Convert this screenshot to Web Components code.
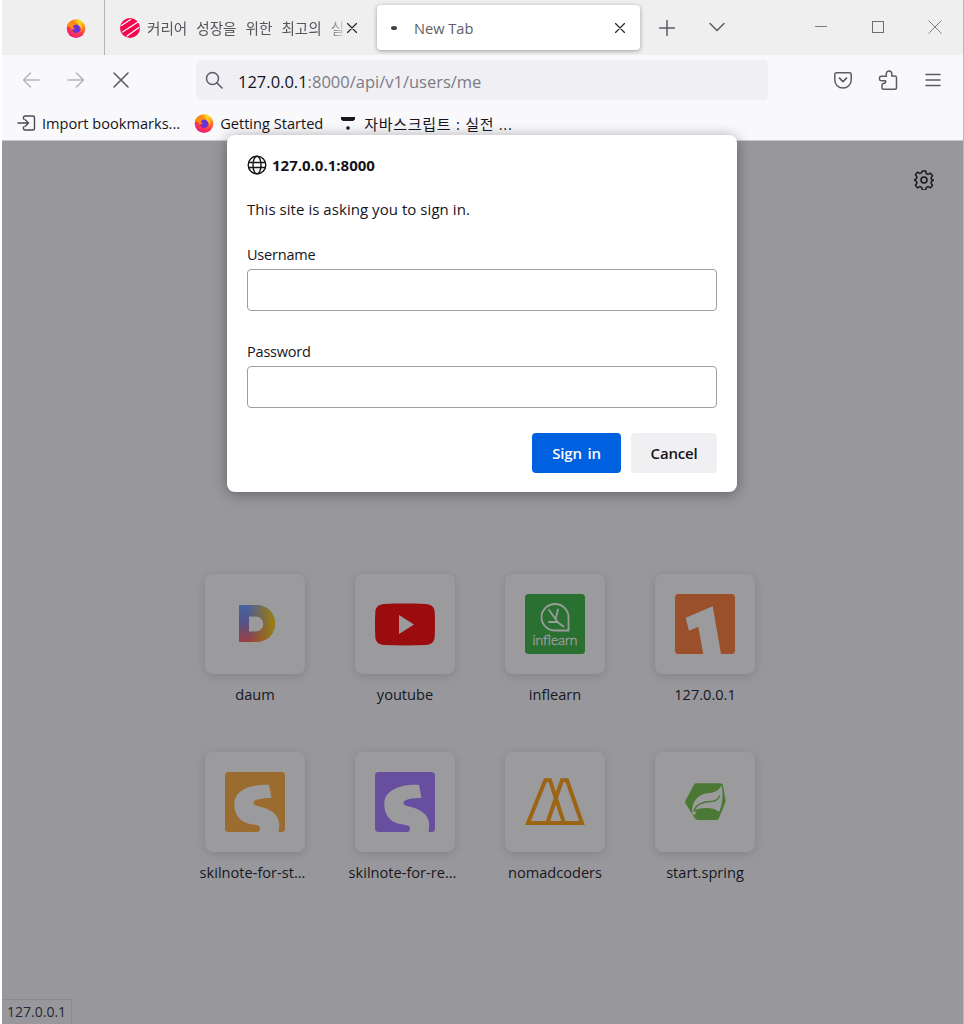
<!DOCTYPE html>
<html lang="ko">
<head>
<meta charset="utf-8">
<title>New Tab</title>
<style>
  html, body { margin: 0; padding: 0; background: #fff; overflow: hidden; }
  body { font: 14px "Open Sans", "Noto Sans CJK KR", sans-serif; color: #15141a; }
</style>
</head>
<body>
<browser-window>
  <tab-strip></tab-strip>
  <nav-toolbar></nav-toolbar>
  <bookmarks-toolbar></bookmarks-toolbar>
  <newtab-page>
    <top-site label="daum" icon="daum"></top-site>
    <top-site label="youtube" icon="youtube"></top-site>
    <top-site label="inflearn" icon="inflearn"></top-site>
    <top-site label="127.0.0.1" icon="one"></top-site>
    <top-site label="skilnote-for-st..." icon="skilOrange" cut></top-site>
    <top-site label="skilnote-for-re..." icon="skilPurple" cut></top-site>
    <top-site label="nomadcoders" icon="nomad"></top-site>
    <top-site label="start.spring" icon="spring"></top-site>
  </newtab-page>
</browser-window>

<script>
const FONT = `"Open Sans", "Noto Sans CJK KR", sans-serif`;

const firefox = (size) => `
  <svg width="${size}" height="${size}" viewBox="0 0 20 20">
    <defs>
      <radialGradient id="ffBase" cx="0.72" cy="0.12" r="1">
        <stop offset="0" stop-color="#ffe226"/>
        <stop offset="0.3" stop-color="#ff980e"/>
        <stop offset="0.68" stop-color="#ff3750"/>
        <stop offset="1" stop-color="#e31587"/>
      </radialGradient>
    </defs>
    <path d="M13.500.3c.3 2.700 3.400 3.700 5 6.800L19.700 11 12 7z" fill="#ffdf2a"/>
    <circle cx="10" cy="10.600" r="9.300" fill="url(#ffBase)"/>
    <circle cx="10.300" cy="10.800" r="4.200" fill="#6a32d6"/>
    <path d="M.9 8.400C1.700 5 4.600 2.800 7.400 2.800c-.8.900-1 1.600-.8 2.300 1.500-.4 3.700-.3 5 .9-2.200-.2-3.800.5-4.300 1.800-.5 1.300.3 2.700 2 3.300-2.200.8-4.800-.2-5.400-2.300-.7.200-1.900 0-3-.4z" fill="#ff8a16"/>
    <path d="M12 5.300c3.200.8 4.800 3.700 4 6.600-.4-2-1.600-3.200-2.900-3.700z" fill="#ffc42e"/>
  </svg>`;

const line = (d, color, w = 1.5) =>
  `<path d="${d}" fill="none" stroke="${color}" stroke-width="${w}" stroke-linecap="round" stroke-linejoin="round"/>`;

const ICONS = {
  daum: `
    <svg width="60" height="60" viewBox="0 0 60 60">
      <defs>
        <linearGradient id="dV" x1="0" y1="0" x2="0" y2="1">
          <stop offset="0" stop-color="#6f9cff"/><stop offset="0.45" stop-color="#7d7fd8"/><stop offset="1" stop-color="#ff5a5a"/>
        </linearGradient>
        <linearGradient id="dH" x1="0" y1="0" x2="1" y2="0">
          <stop offset="0.25" stop-color="#ffc400" stop-opacity="0"/><stop offset="0.95" stop-color="#fdc900"/>
        </linearGradient>
      </defs>
      <path fill-rule="evenodd" fill="url(#dV)" d="M14 11h17c11 0 19 8 19 18.500S42 48 31 48H14zM24 22.500v15h7a7.500 7.500 0 0 0 0-15z"/>
      <path fill-rule="evenodd" fill="url(#dH)" d="M14 11h17c11 0 19 8 19 18.500S42 48 31 48H14zM24 22.500v15h7a7.500 7.500 0 0 0 0-15z"/>
    </svg>`,
  youtube: `
    <svg width="60" height="60" viewBox="0 0 60 60">
      <path d="M9 10c14-.6 28-.6 42 0 5 .2 8.500 3 8.700 8 .4 8.500.4 16.500 0 25-.2 5-3.700 7.800-8.700 8-14 .6-28 .6-42 0-5-.2-8.500-3-8.700-8-.4-8.500-.4-16.500 0-25C.5 13 4 10.200 9 10z" fill="#ff0000"/>
      <path d="M24 21 39 30.500 24 40z" fill="#fff"/>
    </svg>`,
  inflearn: `
    <svg width="60" height="60" viewBox="0 0 60 60">
      <rect width="60" height="60" rx="3.500" fill="#36b23b"/>
      <path d="M30 10c7.500 0 13.500 6 13.500 13.300V36.500H30c-7.500 0-13.500-6-13.500-13.300S22.500 10 30 10z" fill="none" stroke="#fff" stroke-width="1.800"/>
      ${line("M24 16l9 12.500 5.500 4M33 15.500l-2.500 9.500M24 28h8", "#fff", 1.8)}
      <text x="30" y="51" text-anchor="middle" textLength="45" font-family="Lato" font-weight="300" font-size="14" fill="#fff" stroke="#fff" stroke-width=".35">inflearn</text>
    </svg>`,
  one: `
    <svg width="60" height="60" viewBox="0 0 60 60">
      <path d="M3.500 0h53A3.500 3.500 0 0 1 60 3.500V56.500A3.500 3.500 0 0 1 56.500 60H3.500A3.500 3.500 0 0 1 0 56.500V3.500A3.500 3.500 0 0 1 3.500 0z" fill="#ff7935"/>
      <path d="M37.700 12.300 46 60H28.300L23.300 32.700 14 36.700 10.700 23.700z" fill="#fff"/>
    </svg>`,
  skil: (color) => `
    <svg width="60" height="60" viewBox="0 0 60 60">
      <rect width="60" height="60" rx="3.500" fill="${color}"/>
      <path d="M44 13C30 12 12 16 9.500 29 8 41 14 50 25 52c6 1 10 1 10 4.500 0 1.500-1 3-2 3.500H53.500C56 48 52 41 41 36.500 34 34 28.500 34 28.500 31c0-4 9.500-5 18-5z" fill="#fff"/>
    </svg>`,
  nomad: `
    <svg width="60" height="60" viewBox="0 0 60 60">
      <g fill="none" stroke="#ff9f0a" stroke-width="4" stroke-linejoin="miter">
        <path d="M3 51 20.300 8.300H25L39 51z"/>
        <path d="M22.300 51 37 8.300H42L57 51z"/>
      </g>
    </svg>`,
  spring: `
    <svg width="60" height="60" viewBox="0 0 60 60">
      <path d="M21 11.300H45c1.500 0 2.500.7 3 2L50.500 28c.2 1 .1 2-.3 3L44 46c-.5 1.300-1.500 2-3 2H23c-1.500 0-2.500-.7-3.200-2L10.500 31.500c-.6-1-.6-2 0-3L19 12.800c.4-1 1-1.500 2-1.500z" fill="#70c244"/>
      <path d="M46.500 13C45 18 40 20.500 34 21c-9 .8-17 6-17 19 3-2.500 8-4 14-4 6 .3 10 1 13 4 3.500-8 4.500-18 2.500-27z" fill="#fff"/>
      <path d="M19 39c2-7 10-9.500 17-9.500 4 0 7-2 9-6" fill="none" stroke="#70c244" stroke-width="1.500"/>
      <circle cx="19" cy="41" r="1.800" fill="#fff"/>
    </svg>`,
};
ICONS.skilOrange = ICONS.skil("#ffab3b");
ICONS.skilPurple = ICONS.skil("#a276ff");

class BrowserWindow extends HTMLElement {
  constructor() {
    super();
    this.attachShadow({ mode: "open" });
  }

  connectedCallback() {
    this.shadowRoot.innerHTML = `
      <style>
        :host {
          display: flex;
          flex-direction: column;
          box-sizing: border-box;
          width: 964px;
          height: 1024px;
          padding: 0 1px 0 2px;
          background: linear-gradient(#b9b9b9, #b9b9b9) right top / 1px 100% no-repeat;
          font-family: ${FONT};
          overflow: hidden;
        }
      </style>
      <slot></slot>
    `;
  }
}

class TabStrip extends HTMLElement {
  constructor() {
    super();
    this.attachShadow({ mode: "open" });
  }

  connectedCallback() {
    const gray = "#5b5b66";
    this.shadowRoot.innerHTML = `
      <style>
        :host {
          display: flex;
          align-items: center;
          height: 55px;
          flex: none;
          background: #efeff0;
        }
        .pinned {
          box-sizing: border-box;
          width: 103px;
          height: 55px;
          padding-left: 64px;
          display: flex;
          align-items: center;
          border-right: 1px solid #b4b4b4;
        }
        .tab {
          box-sizing: border-box;
          width: 272px;
          height: 45px;
          display: flex;
          align-items: center;
          padding: 0 0 0 15px;
        }
        .tab .title {
          box-sizing: border-box;
          width: 198px;
          margin: 0 2px 0 7px;
          font-size: 14.6px;
          word-spacing: 5.2px;
          color: #55555c;
          white-space: nowrap;
          -webkit-mask-image: linear-gradient(90deg, #000 180px, rgba(0, 0, 0, .15) 197px);
        }
        .active {
          width: 263px;
          background: #fff;
          border-radius: 4px;
          box-shadow: 0 1px 4px rgba(0, 0, 0, .35);
          padding-left: 14px;
        }
        .active .dot {
          width: 6px;
          height: 4px;
          border-radius: 50%;
          background: #3f3f46;
        }
        .active .title {
          margin: 0 0 0 17px;
          width: 201px;
          word-spacing: 0;
          -webkit-mask-image: none;
          color: #5e5e66;
        }
        svg { display: block; flex: none; }
        .new-tab { margin-left: 19px; }
        .all-tabs { margin: 0 0 2px 34px; }
        .window {
          margin: 0 0 2px auto;
          display: flex;
          align-items: center;
          gap: 43px;
          padding-right: 21px;
        }
      </style>
      <div class="pinned">${firefox(20)}</div>
      <div class="tab">
        <svg width="20" height="20" viewBox="0 0 20 20">
          <circle cx="10" cy="10" r="10" fill="#f2074f"/>
          ${line("M1.500 7.500 10.500 1.500M2.500 14 18 4M7 18 19 9.500", "#fff", 1.200)}
        </svg>
        <div class="title">커리어 성장을 위한 최고의 실</div>
        <svg width="10" height="10" viewBox="0 0 10 10">${line("M.5.5l9 9M9.500.5l-9 9", "#26262b", 1.200)}</svg>
      </div>
      <div class="tab active">
        <div class="dot"></div>
        <div class="title">New Tab</div>
        <svg width="10" height="10" viewBox="0 0 10 10">${line("M.5.5l9 9M9.500.5l-9 9", "#26262b", 1.200)}</svg>
      </div>
      <svg class="new-tab" width="16" height="16" viewBox="0 0 16 16">${line("M8 .5v15M.5 8h15", gray, 1.500)}</svg>
      <svg class="all-tabs" width="16" height="10" viewBox="0 0 16 10">${line("M1 1.500 8 8.500l7-7", gray, 1.500)}</svg>
      <div class="window">
        <svg width="14" height="14" viewBox="0 0 14 14"><path d="M1 6.500h12" stroke="#7c7c7c" stroke-width="1"/></svg>
        <svg width="14" height="14" viewBox="0 0 14 14"><rect x="1.500" y="1.500" width="11" height="11" fill="none" stroke="#6e6e6e"/></svg>
        <svg width="14" height="14" viewBox="0 0 14 14"><path d="M.5.5l13 13M13.500.5l-13 13" stroke="#808080" stroke-width="1"/></svg>
      </div>
    `;
  }
}

class NavToolbar extends HTMLElement {
  constructor() {
    super();
    this.attachShadow({ mode: "open" });
  }

  connectedCallback() {
    const dim = "#b4b4ba";
    const ink = "#5b5b66";
    this.shadowRoot.innerHTML = `
      <style>
        :host {
          display: flex;
          align-items: center;
          height: 50px;
          flex: none;
          box-sizing: border-box;
          background: #f9f9fb;
        }
        svg { display: block; flex: none; }
        .nav {
          display: flex;
          align-items: center;
          gap: 27px;
          padding-left: 20px;
          width: 194px;
          box-sizing: border-box;
        }
        .url {
          display: flex;
          align-items: center;
          box-sizing: border-box;
          width: 572px;
          height: 40px;
          padding-left: 9px;
          border-radius: 5px;
          background: #f0f0f4;
          font-size: 16.5px;
          color: #15141a;
        }
        .url span { color: #7b7b84; position: relative; top: 1px; }
        .url .host { margin-left: 15px; color: #15141a; }
        .actions {
          display: flex;
          align-items: center;
          gap: 25px;
          padding-left: 65px;
        }
      </style>
      <div class="nav">
        <svg width="18" height="18" viewBox="0 0 18 18">${line("M17 9H1.500M8.500 2 1.500 9l7 7", dim)}</svg>
        <svg width="18" height="18" viewBox="0 0 18 18">${line("M1 9h15.500M9.500 2l7 7-7 7", dim)}</svg>
        <svg width="18" height="18" viewBox="0 0 18 18">${line("M2 2l14 14M16 2 2 16", ink, 1.600)}</svg>
      </div>
      <div class="url">
        <svg width="18" height="18" viewBox="0 0 18 18">
          <circle cx="7.500" cy="7.500" r="6" fill="none" stroke="#5b5b66" stroke-width="1.500"/>
          ${line("M12 12l5 5", ink, 1.600)}
        </svg>
        <span class="host">127.0.0.1</span><span>:8000/api/v1/users/me</span>
      </div>
      <div class="actions">
        <svg width="20" height="20" viewBox="0 0 20 20">
          <path d="M3.500 2.800h13c1 0 1.700.7 1.700 1.700v5.500c0 4.500-3.700 8-8.200 8s-8.200-3.500-8.200-8V4.500c0-1 .7-1.700 1.700-1.700z" fill="none" stroke="#5b5b66" stroke-width="1.500"/>
          ${line("M6.500 8.200 10 11.700l3.500-3.500", ink, 1.700)}
        </svg>
        <svg width="20" height="20" viewBox="0 0 20 20">
          <path d="M11 1c1.700 0 2.800 1.200 2.800 2.800V6h3c1 0 1.700.7 1.700 1.700v10c0 .8-.7 1.500-1.500 1.500H5.500c-.8 0-1.500-.7-1.500-1.500v-3c0-.8.600-1.200 1.500-1.200 1.300 0 2.200-.7 2.200-1.900S6.800 10.700 5.500 10.700H3c-.9 0-1.500-.6-1.500-1.400V8c0-1 .7-1.700 1.700-1.700H8.300V3.800C8.300 2.200 9.400 1 11 1z" fill="none" stroke="#5b5b66" stroke-width="1.500"/>
        </svg>
        <svg width="20" height="20" viewBox="0 0 20 20">${line("M3 4.500h14M3 10h14M3 15.500h14", ink, 1.500)}</svg>
      </div>
    `;
  }
}

class BookmarksToolbar extends HTMLElement {
  constructor() {
    super();
    this.attachShadow({ mode: "open" });
  }

  connectedCallback() {
    this.shadowRoot.innerHTML = `
      <style>
        :host {
          display: flex;
          align-items: center;
          height: 36px;
          flex: none;
          box-sizing: border-box;
          padding: 1px 0 0 15px;
          background: #f9f9fb;
          border-bottom: 1px solid #c9c9cc;
          font-size: 14.6px;
          color: #15141a;
          white-space: nowrap;
        }
        .item { display: flex; align-items: center; gap: 6px; }
        .item:first-child { gap: 4px; }
        .item + .item { margin-left: 14px; }
        .item:last-child { margin-left: 18px; gap: 5px; }
        .ko { font-size: 15px; letter-spacing: .7px; }
        svg { display: block; flex: none; }
      </style>
      <div class="item">
        <svg width="19" height="16" viewBox="0 0 19 16">
          ${line("M1 8h10M8 4.500 11.500 8 8 11.500M6.500 4V2.500c0-.8.600-1.500 1.500-1.500h8c.8 0 1.500.7 1.500 1.500v11c0 .8-.7 1.500-1.500 1.500H8c-.9 0-1.500-.7-1.500-1.500V12", "#4a4a52", 1.400)}
        </svg>
        <span>Import bookmarks...</span>
      </div>
      <div class="item">${firefox(20)}<span>Getting Started</span></div>
      <div class="item">
        <svg width="18" height="18" viewBox="0 0 18 18">
          <path d="M0 3h14v2.500l-2 1.500H2L0 5.500z" fill="#17171c"/>
          <circle cx="7" cy="14" r="1.800" fill="#17171c"/>
        </svg>
        <span class="ko">자바스크립트 : 실전 ...</span>
      </div>
    `;
  }
}

class TopSite extends HTMLElement {
  constructor() {
    super();
    this.attachShadow({ mode: "open" });
  }

  connectedCallback() {
    const label = this.getAttribute("label");
    const icon = ICONS[this.getAttribute("icon")] || "";
    this.shadowRoot.innerHTML = `
      <style>
        :host {
          display: flex;
          flex-direction: column;
          align-items: center;
          width: 150px;
          height: 178px;
        }
        .tile {
          display: flex;
          align-items: center;
          justify-content: center;
          width: 100px;
          height: 100px;
          flex: none;
          border-radius: 8px;
          background: #fff;
          box-shadow: 0 2px 8px rgba(58, 57, 68, .2);
        }
        svg { display: block; }
        .label {
          margin-top: 10px;
          font-size: 14.6px;
          line-height: 20px;
          color: #15141a;
          white-space: nowrap;
        }
        :host([cut]) .label { padding-right: 5px; }
      </style>
      <div class="tile">${icon}</div>
      <div class="label">${label}</div>
    `;
  }
}

class NewtabPage extends HTMLElement {
  constructor() {
    super();
    this.attachShadow({ mode: "open" });
  }

  connectedCallback() {
    this.shadowRoot.innerHTML = `
      <style>
        :host {
          display: block;
          position: relative;
          flex: 1;
          min-height: 0;
          background: #f9f9fb;
        }
        .head {
          display: flex;
          justify-content: flex-end;
          box-sizing: border-box;
          height: 433px;
          padding: 29px 29px 0 0;
        }
        .head svg { display: block; }
        .grid {
          display: grid;
          grid-template-columns: repeat(4, 150px);
          justify-content: start;
          margin-left: 178px;
        }
        .status {
          position: absolute;
          left: 0;
          bottom: 0;
          height: 24px;
          padding: 0 5px;
          line-height: 24px;
          font-size: 14px;
          color: #2b3345;
          background: #f9f9fb;
          border-top: 1px solid #e0e0e6;
          border-right: 1px solid #e0e0e6;
        }
        .veil {
          position: absolute;
          inset: 0;
          background: rgba(28, 27, 34, .44);
        }
      </style>
      <div class="head">
        <svg width="20" height="20" viewBox="0 0 20 20">
          <path d="M8.300 1h3.400l.6 2.600 1.700.8 2.400-1.200 2.200 2.500-1.500 2.200.4 1.800L19.900 10v0l-2.400 1.300-.4 1.800 1.500 2.200-2.200 2.500-2.400-1.200-1.700.8-.6 2.600H8.300l-.6-2.600-1.700-.8-2.400 1.200-2.200-2.500 1.500-2.200-.4-1.800L0 10l2.500-1.300.4-1.800-1.500-2.200 2.200-2.500 2.400 1.200 1.700-.8z" fill="none" stroke="#15141a" stroke-width="1.500" stroke-linejoin="round"/>
          <circle cx="10" cy="10" r="3" fill="none" stroke="#15141a" stroke-width="1.500"/>
        </svg>
      </div>
      <div class="grid"><slot></slot></div>
      <div class="status">127.0.0.1</div>
      <div class="veil"></div>
      <auth-dialog></auth-dialog>
    `;
  }
}

class AuthDialog extends HTMLElement {
  constructor() {
    super();
    this.attachShadow({ mode: "open" });
  }

  connectedCallback() {
    this.shadowRoot.innerHTML = `
      <style>
        :host {
          position: absolute;
          left: 225px;
          top: -6px;
          box-sizing: border-box;
          width: 510px;
          height: 357px;
          padding: 20px 20px 19px;
          display: flex;
          flex-direction: column;
          background: #fff;
          border-radius: 8px;
          box-shadow: 0 2px 14px rgba(15, 15, 20, .4);
          font-size: 15px;
          color: #15141a;
        }
        .origin {
          display: flex;
          align-items: center;
          gap: 5px;
          height: 20px;
          font-weight: 700;
        }
        svg { display: block; flex: none; }
        p {
          margin: 24px 0 0;
          line-height: 20px;
          letter-spacing: .05px;
        }
        label {
          display: block;
          font-size: 14.5px;
          line-height: 20px;
          letter-spacing: -.2px;
        }
        .first { margin-top: 26px; }
        .second { margin-top: 31px; }
        input {
          display: block;
          box-sizing: border-box;
          width: 100%;
          height: 42px;
          margin-top: 4px;
          border: 1px solid #9d9da3;
          border-radius: 4px;
          background: #fff;
          outline: none;
        }
        .buttons {
          display: flex;
          justify-content: flex-end;
          gap: 10px;
          margin-top: auto;
        }
        button {
          height: 40px;
          border: none;
          border-radius: 4px;
          font: 600 15px ${FONT};
          letter-spacing: -.2px;
          word-spacing: 2px;
          padding: 0;
        }
        .primary { width: 89px; background: #0061e0; color: #fbfbfe; }
        .secondary { width: 86px; background: #f0f0f2; color: #15141a; }
      </style>
      <div class="origin">
        <svg width="20" height="20" viewBox="0 0 20 20" fill="none" stroke="#15141a" stroke-width="1.400">
          <circle cx="10" cy="10" r="8.800"/>
          <ellipse cx="10" cy="10" rx="4" ry="8.800"/>
          <path d="M1.500 7.500h17M1.500 12.500h17"/>
        </svg>
        <span>127.0.0.1:8000</span>
      </div>
      <p>This site is asking you to sign in.</p>
      <label class="first">Username</label>
      <input type="text" aria-label="Username">
      <label class="second">Password</label>
      <input type="password" aria-label="Password">
      <div class="buttons">
        <button class="primary">Sign in</button>
        <button class="secondary">Cancel</button>
      </div>
    `;
  }
}

customElements.define("browser-window", BrowserWindow);
customElements.define("tab-strip", TabStrip);
customElements.define("nav-toolbar", NavToolbar);
customElements.define("bookmarks-toolbar", BookmarksToolbar);
customElements.define("top-site", TopSite);
customElements.define("newtab-page", NewtabPage);
customElements.define("auth-dialog", AuthDialog);
</script>
</body>
</html>
